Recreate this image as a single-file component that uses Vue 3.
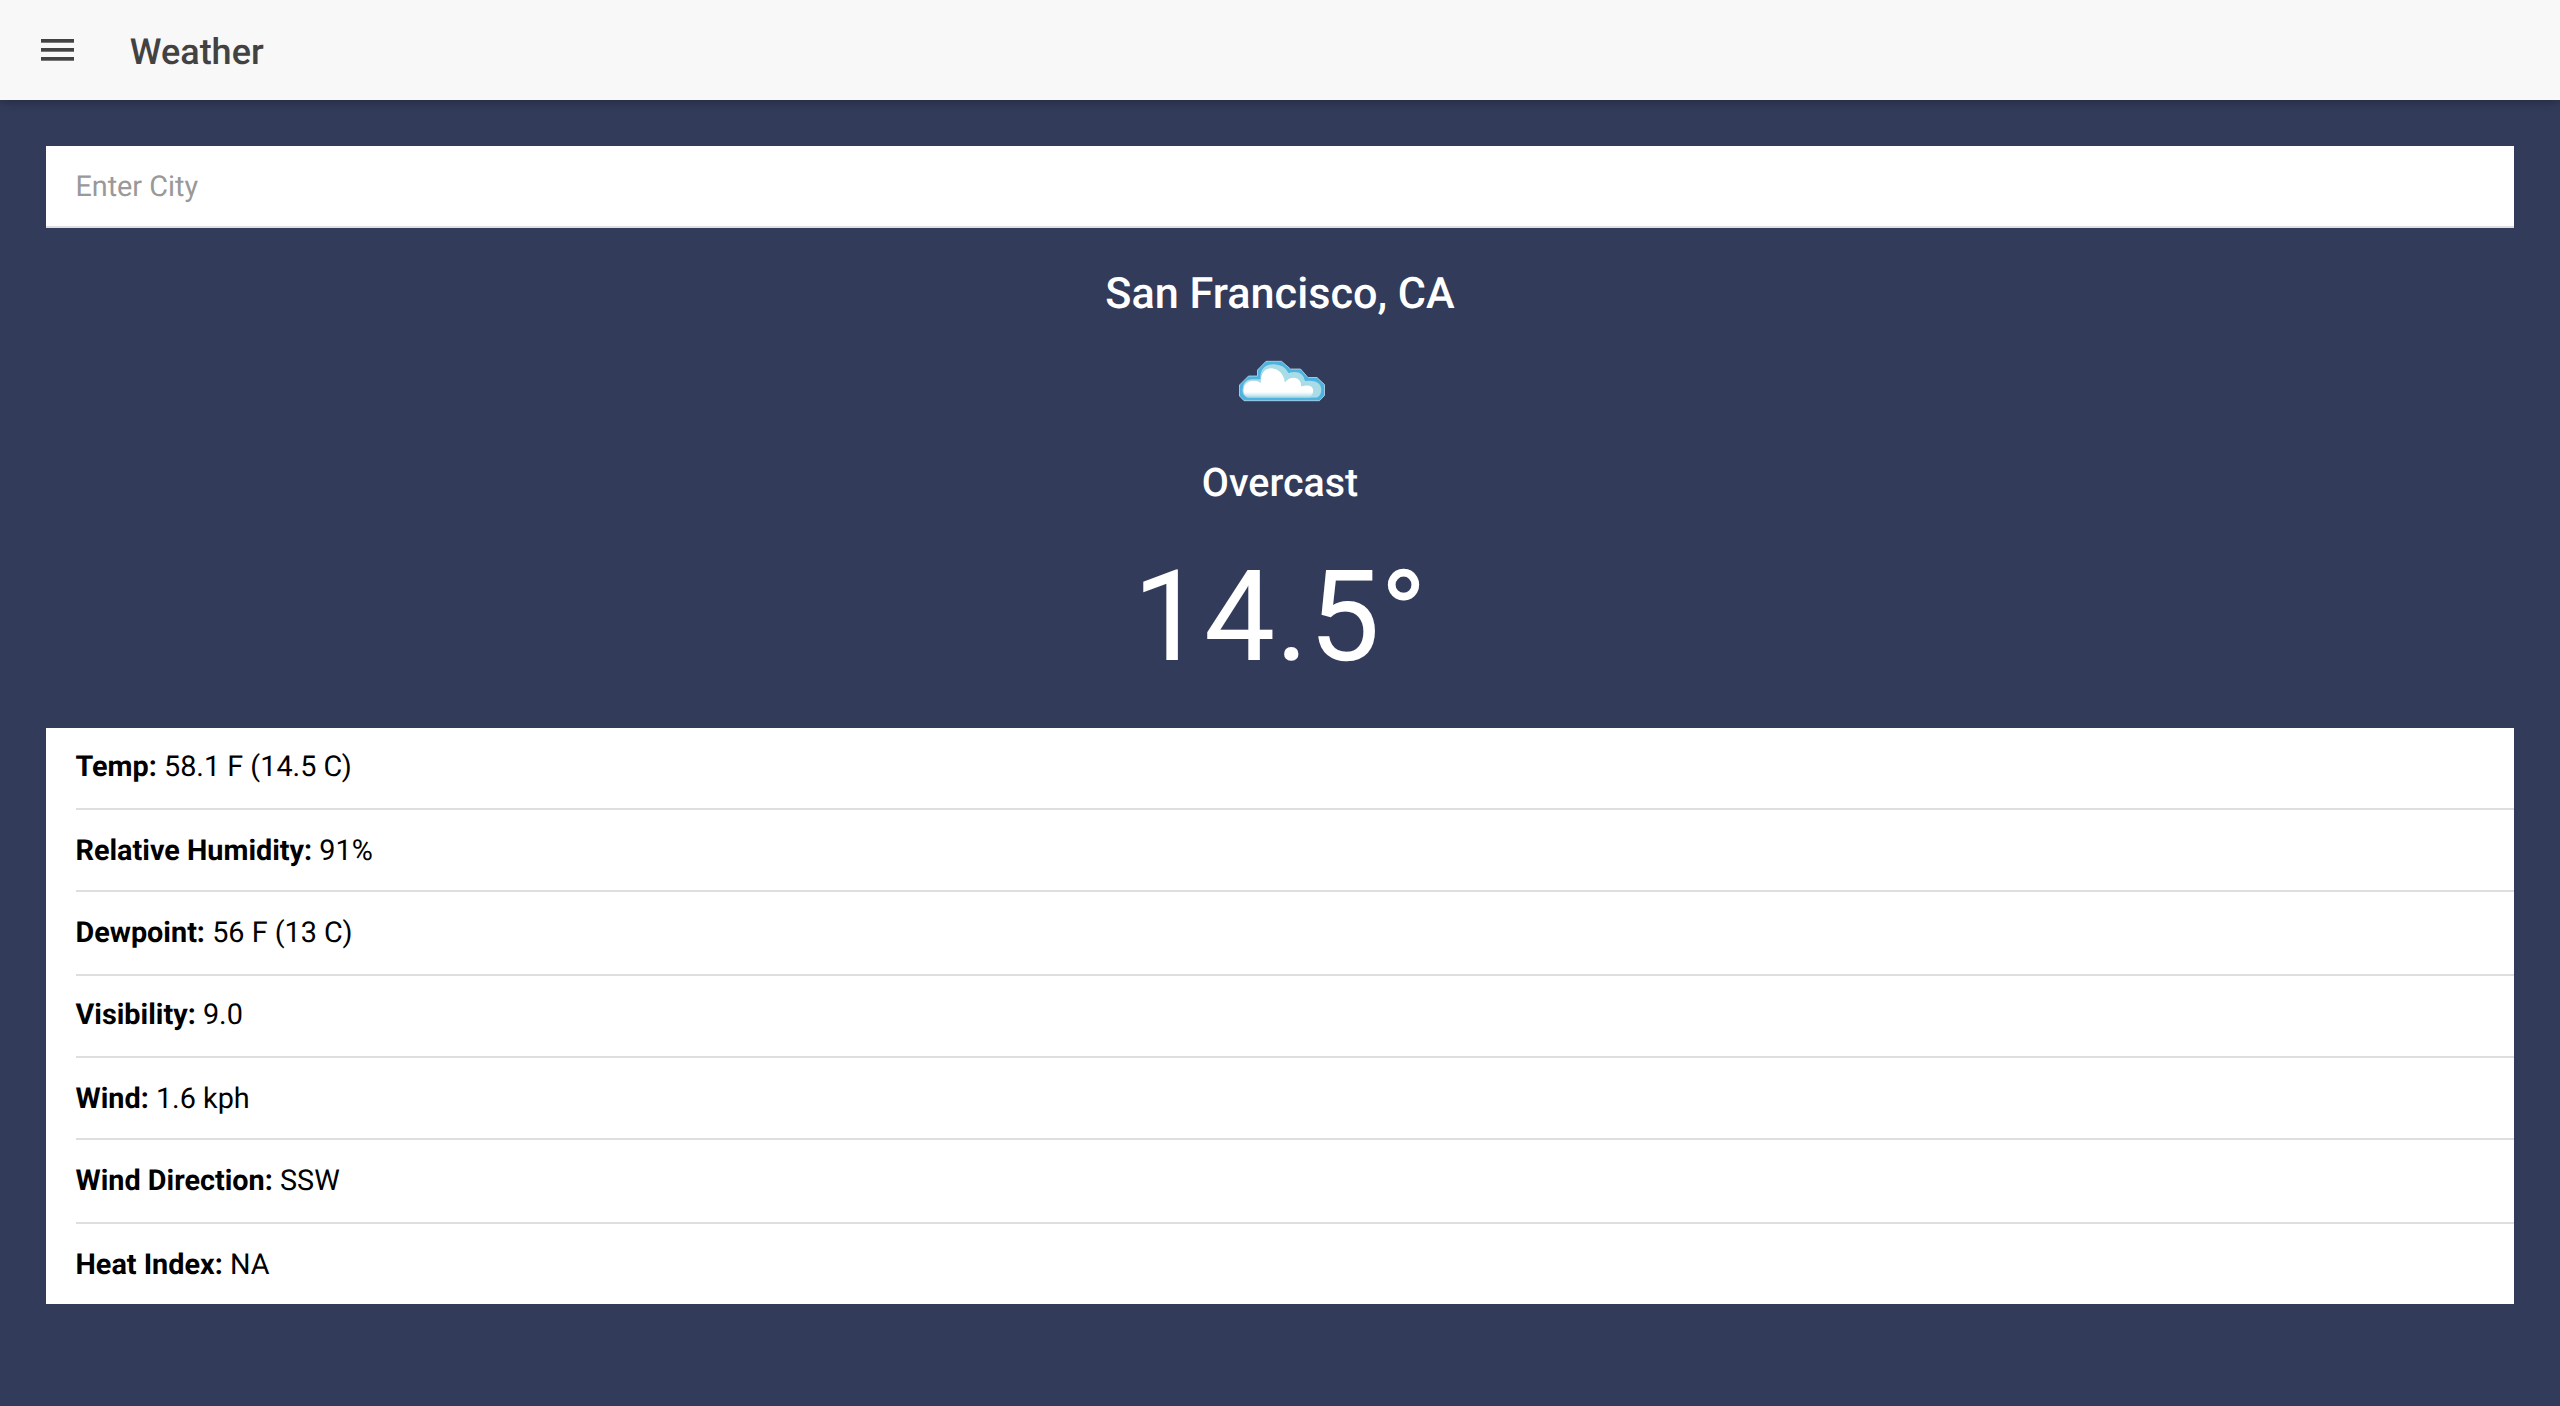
<script setup>
const rows = [
  { label: 'Temp:', value: '58.1 F (14.5 C)', height: 82, shift: 0 },
  { label: 'Relative Humidity:', value: '91%', height: 82, shift: 2 },
  { label: 'Dewpoint:', value: '56 F (13 C)', height: 84, shift: 2 },
  { label: 'Visibility:', value: '9.0', height: 82, shift: 0 },
  { label: 'Wind:', value: '1.6 kph', height: 82, shift: 2 },
  { label: 'Wind Direction:', value: 'SSW', height: 84, shift: 2 },
  { label: 'Heat Index:', value: 'NA', height: 80, shift: 2 },
]
</script>

<template>
  <div class="page">
    <header class="toolbar">
      <button class="menu" aria-label="Menu">
        <svg width="34" height="22" viewBox="0 0 34 22" fill="#424242">
          <rect x="0" y="0" width="33" height="3.7" />
          <rect x="0" y="9" width="33" height="3.7" />
          <rect x="0" y="18" width="33" height="3.7" />
        </svg>
      </button>
      <h1 class="title">Weather</h1>
    </header>
    <main class="content">
      <input class="search" type="text" placeholder="Enter City" />
      <section class="current">
        <h2 class="city">San Francisco, CA</h2>
        <svg class="cloud" width="120" height="80" viewBox="0 0 120 80">
          <defs>
            <linearGradient id="base" x1="0" y1="0" x2="0" y2="1">
              <stop offset="0" stop-color="#a9dce6" stop-opacity="0" />
              <stop offset="1" stop-color="#a9dce6" />
            </linearGradient>
          </defs>
          <path
            d="M24 60.7L19.5 56V45L28.5 36H37.5V30L46 21.3H61.5L70.5 29H80.5L88 37.5H97L104.5 44.5V55.5L99.5 60.7Z"
            fill="#4fb3e0" stroke="#b9dcf0" stroke-width=".8" stroke-linejoin="round"
          />
          <path
            d="M27 57.5Q22.5 55.5 22.5 50Q22.5 39.5 32 39.2H40.5Q39.5 25 53.5 24.2Q64.5 24.5 68.5 33Q82.5 29 85 41Q101 39.5 101.3 50Q101 55.5 97 57.5Z"
            fill="#a9dce6"
          />
          <path
            d="M28 56.5Q23.5 55 23.5 50Q24 41 33 40.8Q38 40.8 40.8 43Q40.5 28.5 51.5 28.2Q62.5 29 65 42.5Q68 37.8 74 37.8Q81 38.5 81.3 46.5Q92.5 43.5 93.2 50.5Q93 55.5 89.5 56.5Z"
            fill="#fff"
          />
          <path d="M24.5 52H93V56.2Q91 57.5 88 57.5H28Q25.5 56.5 24.5 52Z" fill="url(#base)" />
        </svg>
        <h3 class="condition">Overcast</h3>
        <p class="degrees">14.5°</p>
      </section>
      <ul class="details">
        <li v-for="row in rows" :key="row.label" class="row" :style="{ height: row.height + 'px' }">
          <div class="inner" :style="{ paddingTop: 19 + row.shift + 'px' }">
            <strong>{{ row.label }}</strong> {{ row.value }}
          </div>
        </li>
      </ul>
    </main>
  </div>
</template>

<style>
html, body { margin: 0; background: #323b5a; }
</style>

<style scoped>
.page {
  min-height: 1406px;
  background: #323b5a;
  font-family: Roboto, sans-serif;
  text-rendering: geometricPrecision;
  display: flex;
  flex-direction: column;
}
.toolbar {
  height: 100px;
  box-sizing: border-box;
  padding-left: 41px;
  display: flex;
  align-items: center;
  background: #f8f8f8;
  box-shadow: 0 2px 10px rgba(0, 0, 0, .28);
}
.menu {
  border: 0;
  padding: 0;
  margin: 0 54.8px 0 0;
  background: none;
  width: 34px;
  height: 22px;
}
.menu svg { display: block; }
.title {
  margin: 4px 0 0;
  font-size: 36px;
  font-weight: 500;
  line-height: 60px;
  color: #424242;
}
.content {
  padding: 46px;
  display: flex;
  flex-direction: column;
}
.search {
  height: 82px;
  box-sizing: border-box;
  border: 0;
  border-bottom: 2px solid #dedede;
  border-radius: 0;
  padding: 2px 29.4px 0;
  background: #fff;
  font: 28.8px Roboto, sans-serif;
  text-rendering: geometricPrecision;
}
.search::placeholder { color: #999; opacity: 1; }
.current {
  height: 500px;
  box-sizing: border-box;
  padding-top: 36px;
  display: flex;
  flex-direction: column;
  align-items: center;
  color: #fff;
}
.city {
  margin: 0;
  font-size: 43.2px;
  font-weight: 500;
  line-height: 60px;
}
.cloud { margin-top: 16px; flex: none; }
.condition {
  margin: 33px 0 0;
  font-size: 39.4px;
  font-weight: 500;
  line-height: 60px;
}
.degrees {
  margin: 34px 0 0;
  font-size: 126.7px;
  line-height: 140px;
}
.details {
  margin: 0;
  padding: 0 0 0 30px;
  list-style: none;
  background: #fff;
  color: #000;
  font-size: 28.8px;
  line-height: 40px;
}
.row {
  box-sizing: border-box;
  border-bottom: 2px solid #dedede;
}
.row:last-child { border-bottom: 0; }
.inner { margin-left: -0.5px; }
</style>
